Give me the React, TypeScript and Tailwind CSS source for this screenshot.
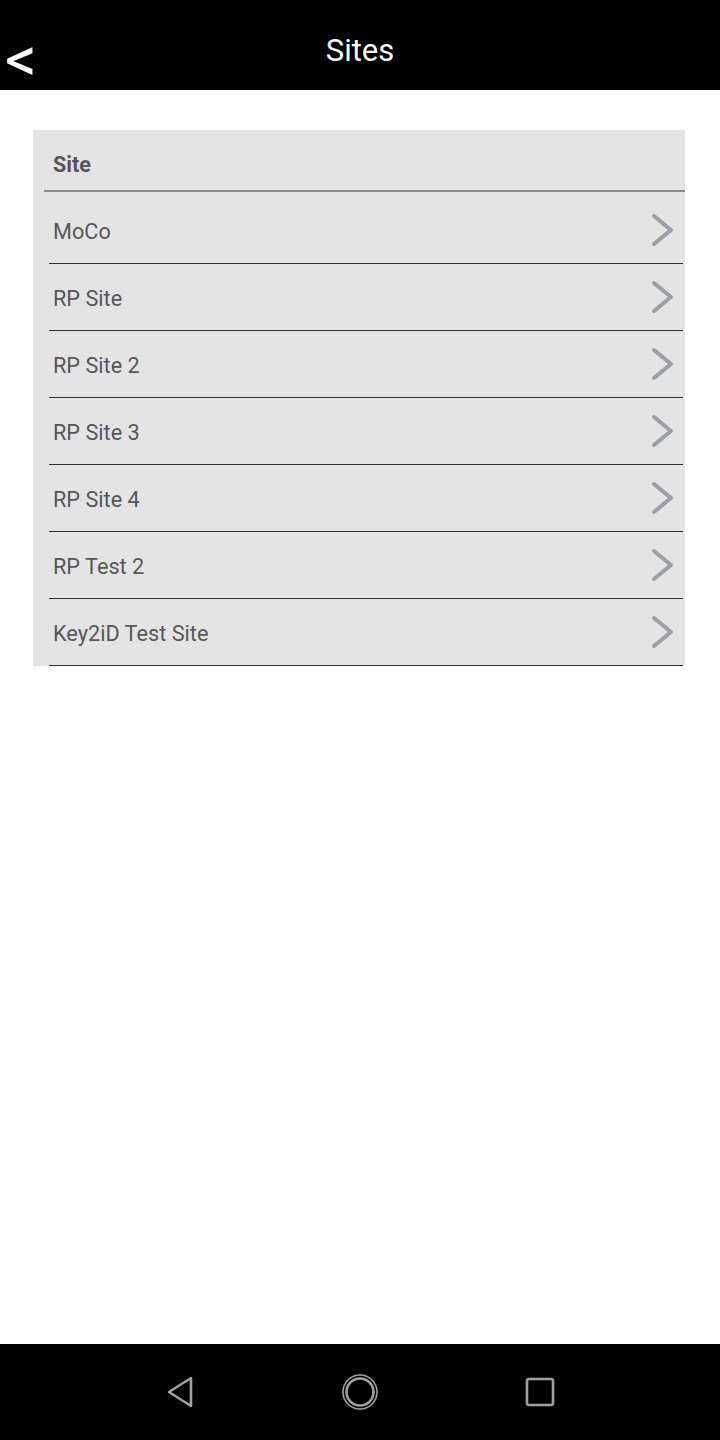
import React from "react";

const sites = ["MoCo", "RP Site", "RP Site 2", "RP Site 3", "RP Site 4", "RP Test 2", "Key2iD Test Site"];

function Chevron() {
  return (
    <svg width="28" height="34" viewBox="0 0 28 34" className="shrink-0">
      <polyline points="4,3 21,17 4,31" fill="none" stroke="#9aa0a8" strokeWidth="4" strokeLinecap="round" strokeLinejoin="round" />
    </svg>
  );
}

export default function App() {
  return (
    <div className="w-[720px] h-[1440px] bg-white flex flex-col" style={{ fontFamily: "Roboto, 'Noto Sans', sans-serif" }}>
      <div className="h-[90px] bg-black relative flex items-center justify-center shrink-0">
        <span className="absolute left-[5px] top-[28px] text-white text-[63px] leading-none font-normal">&lt;</span>
        <span className="text-white text-[31px] leading-none mt-[11px]">Sites</span>
      </div>
      <div className="flex-1 pt-[40px] pl-[33px] pr-[35px]">
        <div className="bg-[#e4e4e4]">
          <div className="h-[62px] ml-[11px] pr-[1px] pt-[10px] border-b-2 border-[#8a8a8a] flex items-center">
            <span className="pl-[9px] text-[21.5px] font-bold text-[#555555]">Site</span>
          </div>
          <div className="mt-[5px]">
            {sites.map((s) => (
              <div key={s} className="h-[67px] ml-[16px] mr-[2px] border-b border-[#2e2e2e] flex items-center justify-between">
                <span className="pl-[4px] pt-[4px] text-[21.7px] text-[#575757]">{s}</span>
                <div className="mr-[5px]">
                  <Chevron />
                </div>
              </div>
            ))}
          </div>
        </div>
      </div>
      <div className="h-[96px] bg-black flex items-center justify-center gap-[140px] shrink-0">
        <svg width="40" height="40" viewBox="0 0 40 40">
          <path d="M31 6 L9 20 L31 34 Z" fill="none" stroke="#a0a0a0" strokeWidth="2.6" strokeLinejoin="round" />
        </svg>
        <svg width="40" height="40" viewBox="0 0 40 40">
          <circle cx="20" cy="20" r="17" fill="none" stroke="#a0a0a0" strokeWidth="1.6" />
          <circle cx="20" cy="20" r="13.5" fill="none" stroke="#a0a0a0" strokeWidth="2.6" />
        </svg>
        <svg width="40" height="40" viewBox="0 0 40 40">
          <rect x="7" y="7" width="26" height="26" rx="2" fill="none" stroke="#a0a0a0" strokeWidth="2.6" />
        </svg>
      </div>
    </div>
  );
}
